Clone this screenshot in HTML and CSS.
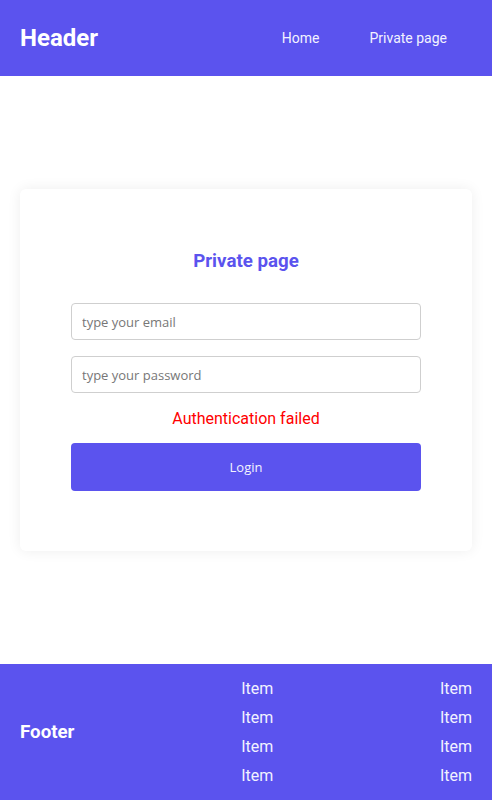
FILE: index.html
```html
<!DOCTYPE html>
<html>
<head>
<meta charset="utf-8">
<link rel="stylesheet" href="styles.css">
</head>
<body>
<div class="page">
  <header class="header">
    <div class="logo">Header</div>
    <nav class="nav">
      <a class="nav-link" href="#">Home</a>
      <a class="nav-link" href="#">Private page</a>
    </nav>
  </header>
  <main class="main">
    <div class="card">
      <h2 class="title">Private page</h2>
      <form class="form">
        <input class="input" type="text" placeholder="type your email">
        <input class="input" type="password" placeholder="type your password">
        <div class="error">Authentication failed</div>
        <button class="button" type="button">Login</button>
      </form>
    </div>
  </main>
  <footer class="footer">
    <div class="footer-title">Footer</div>
    <ul class="footer-list">
      <li>Item</li><li>Item</li><li>Item</li><li>Item</li>
    </ul>
    <ul class="footer-list">
      <li>Item</li><li>Item</li><li>Item</li><li>Item</li>
    </ul>
  </footer>
</div>
</body>
</html>
```

FILE: styles.css
```css
* { box-sizing: border-box; }
html, body { margin: 0; padding: 0; }
body {
  font-family: Roboto, "Liberation Sans", sans-serif;
  background: #fff;
}
.page {
  display: flex;
  flex-direction: column;
  min-height: 800px;
}
.header {
  height: 76px;
  background: #5b53ee;
  display: flex;
  align-items: center;
  justify-content: space-between;
  padding: 0 20px;
}
.logo {
  color: #fff;
  font-size: 24px;
  font-weight: 700;
}
.nav { display: flex; }
.nav-link {
  color: #f2f2ff;
  text-decoration: none;
  font-size: 14px;
  padding: 0 25px;
}
.nav-link:last-child { margin-right: -20px; padding-right: 45px; }
.main {
  flex: 1;
  display: flex;
  align-items: center;
  justify-content: center;
  padding: 0 20px;
}
.card {
  width: 452px;
  background: #fff;
  border-radius: 6px;
  box-shadow: 0 0 14px rgba(0,0,0,0.07);
  padding: 60px 51px;
  display: flex;
  flex-direction: column;
  align-items: stretch;
}
.title {
  margin: 0 0 30px;
  text-align: center;
  font-size: 18.72px;
  line-height: 24px;
  font-weight: 700;
  color: #5b53ee;
}
.form {
  display: flex;
  flex-direction: column;
}
.input {
  height: 37px;
  border: 1px solid #cfcfcf;
  border-radius: 4px;
  padding: 0 10px;
  font-family: "Open Sans", sans-serif;
  font-size: 13px;
  color: #333;
  outline: none;
}
.input + .input { margin-top: 16px; }
.input::placeholder { color: #777; }
.error {
  margin: 16px 0 15px;
  text-align: center;
  color: #ff0000;
  font-size: 16px;
  line-height: 19px;
}
.button {
  height: 48px;
  border: none;
  border-radius: 4px;
  background: #5b53ee;
  color: #f2f2ff;
  font-family: "Open Sans", sans-serif;
  font-size: 13px;
  cursor: pointer;
}
.footer {
  height: 136px;
  background: #5b53ee;
  display: flex;
  align-items: center;
  justify-content: space-between;
  padding: 10px 20px;
  color: #fff;
}
.footer-title {
  font-size: 18.72px;
  font-weight: 700;
}
.footer-list {
  list-style: none;
  margin: 0;
  padding: 0;
  color: #f2f2ff;
  font-size: 16px;
  line-height: 29px;
}
```
